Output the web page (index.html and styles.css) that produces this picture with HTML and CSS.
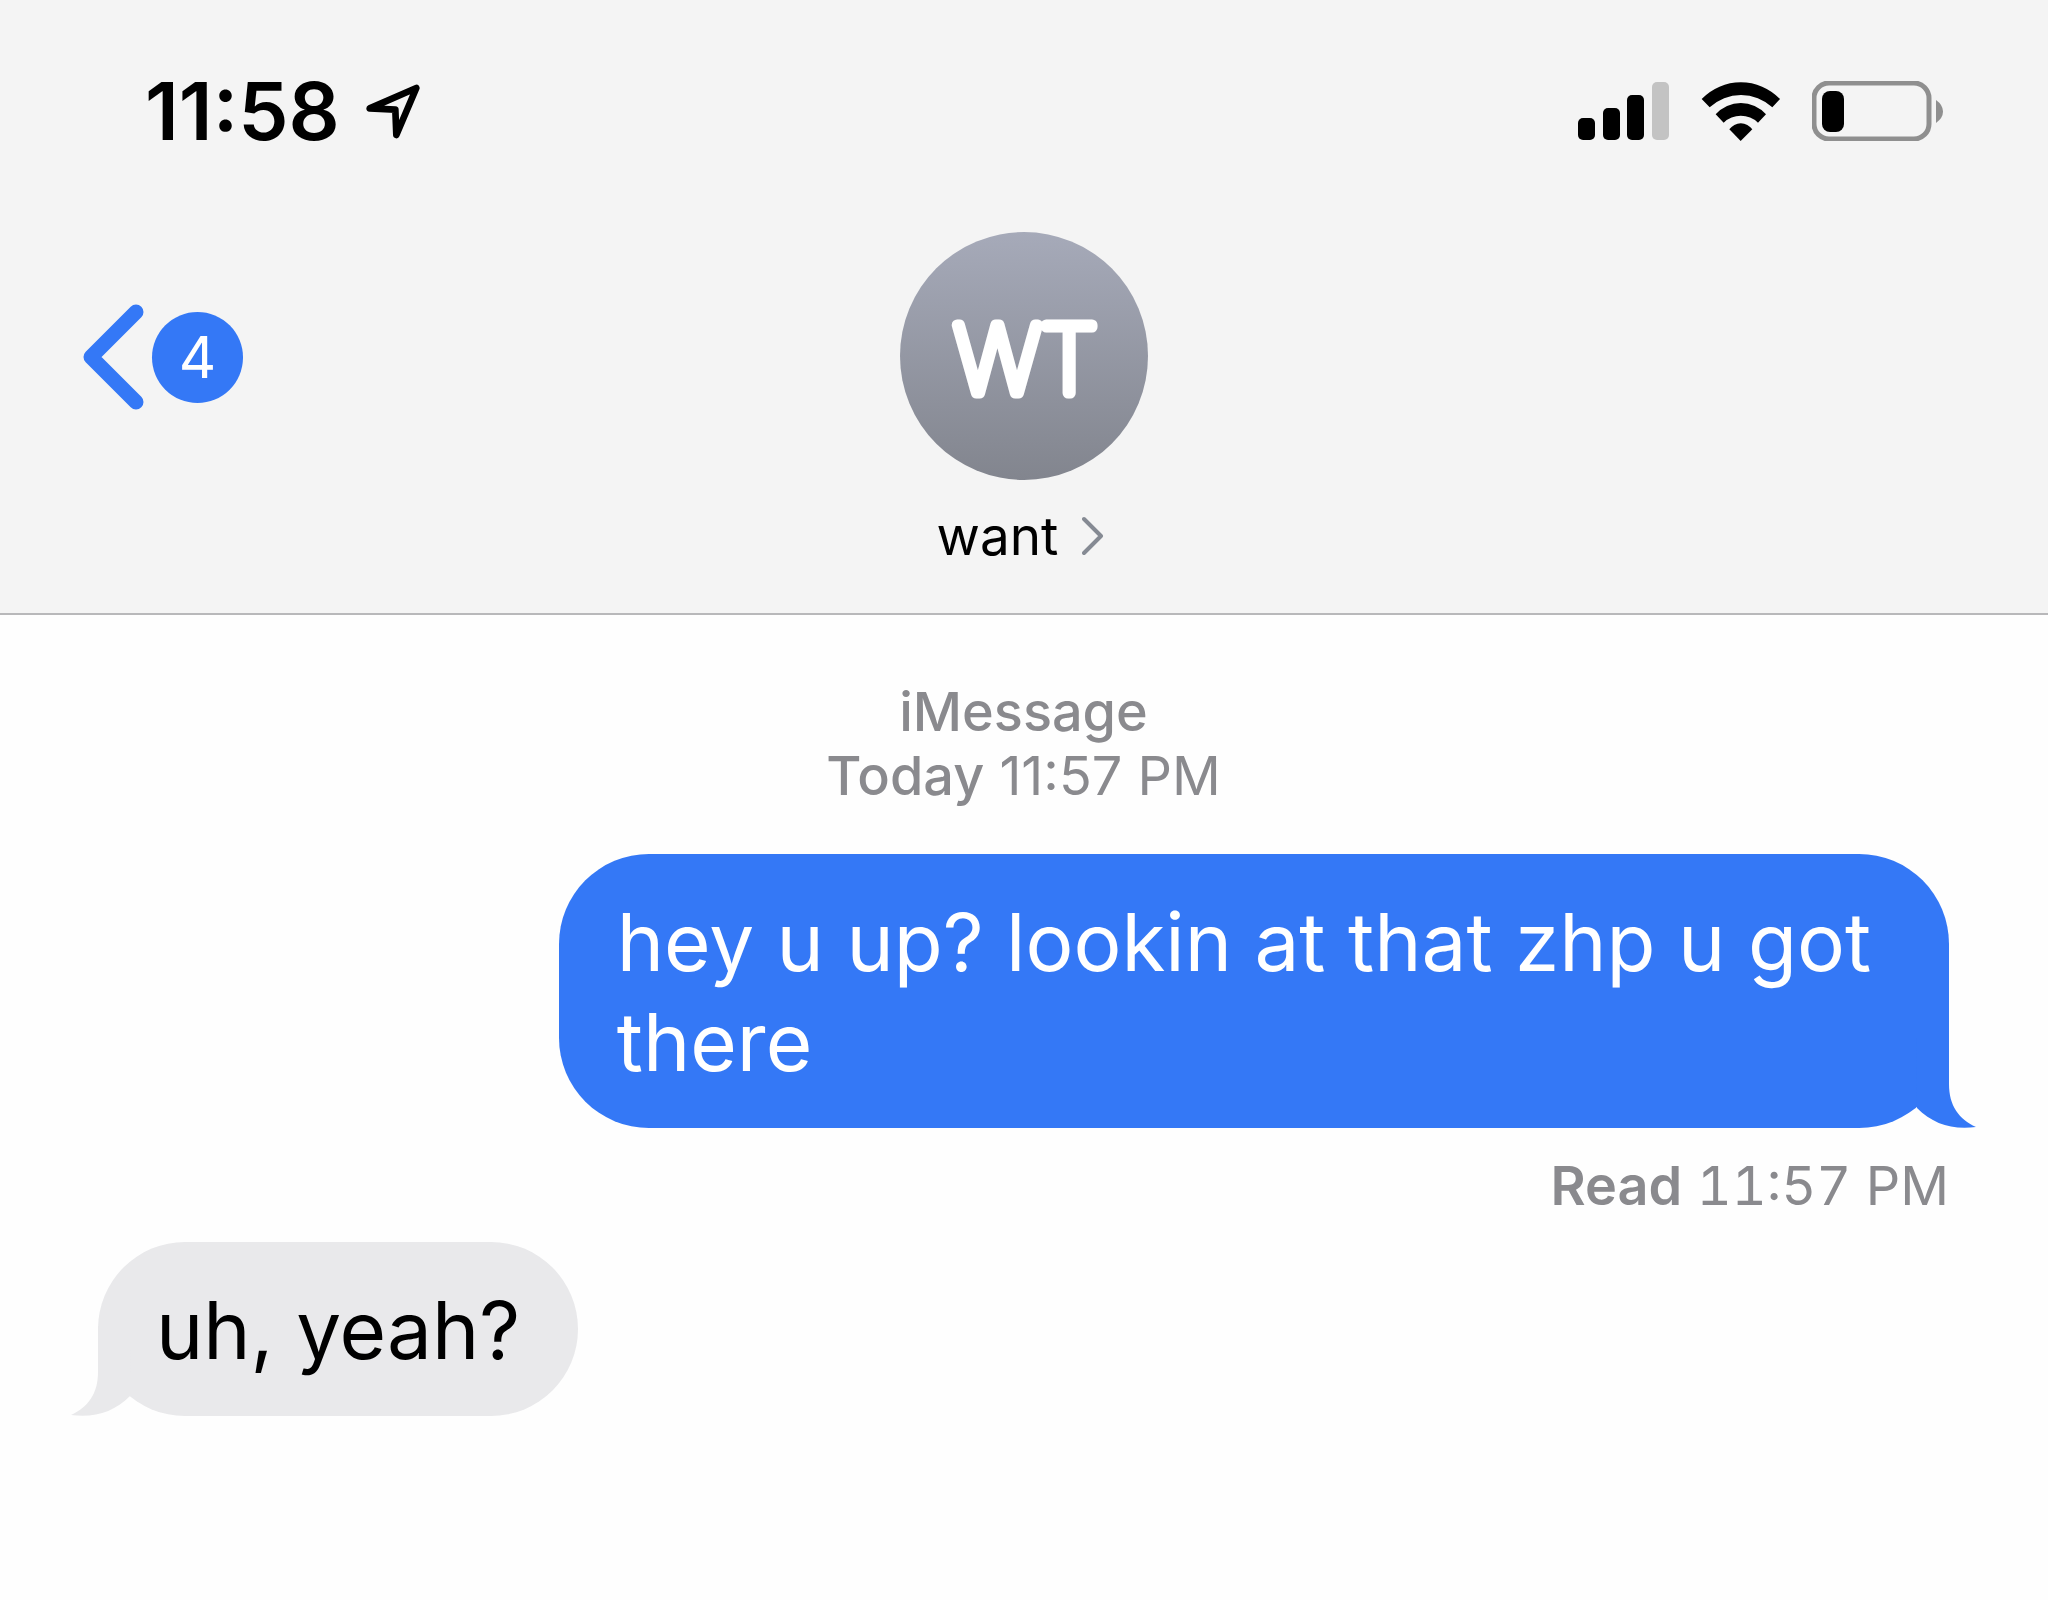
FILE: index.html
```html
<!DOCTYPE html>
<html lang="en">
<head>
<meta charset="utf-8">
<meta name="viewport" content="width=device-width, initial-scale=1">
<title>Messages – want</title>
<link rel="stylesheet" href="styles.css">
</head>
<body>
<header class="header">
  <div class="status">
    <div class="status-group status-left">
      <time class="clock">11:58</time>
      <svg class="location" viewBox="705 70 165 165" aria-hidden="true"><path d="M716 143 L856 82 L796 223 L793 147 Z"/></svg>
    </div>
    <div class="status-group status-right">
      <svg class="signal" viewBox="0 0 92 60" aria-hidden="true">
        <rect x="0" y="37" width="17" height="22" rx="5"/>
        <rect x="25" y="27" width="17" height="32" rx="5"/>
        <rect x="49" y="14" width="17" height="45" rx="5"/>
        <rect class="signal-off" x="74" y="1" width="17" height="58" rx="5"/>
      </svg>
      <svg class="wifi" viewBox="422 60 240 180" aria-hidden="true">
        <path d="M424 114A163 163 0 0 1 659 114L636 139A138 138 0 0 0 448 139Z"/>
        <path d="M466 160A101 101 0 0 1 617 160L593 185A75 75 0 0 0 490 185Z"/>
        <path d="M507 205A42 42 0 0 1 576 205L541 240Z"/>
      </svg>
      <svg class="battery" viewBox="0 0 132 60" aria-hidden="true">
        <rect class="battery-case" x="2" y="2" width="115" height="56" rx="15"/>
        <rect x="10" y="10" width="22" height="41" rx="8"/>
        <path class="battery-cap" d="M124 19Q131 24 131 30.500Q131 37 124 42Z"/>
      </svg>
    </div>
  </div>
  <nav class="nav">
    <button class="back" type="button" aria-label="Back, 4 unread">
      <svg class="back-arrow" viewBox="0 0 62 106" aria-hidden="true"><path d="M53 8L8 53L53 98"/></svg>
      <span class="badge">4</span>
    </button>
    <a class="contact" href="#want">
      <span class="avatar">
        <svg class="initials" viewBox="0 0 248 248" aria-hidden="true"><text x="126" y="161" text-anchor="middle">WT</text></svg>
      </span>
      <span class="name">want
        <svg class="name-arrow" viewBox="0 0 29 40" aria-hidden="true"><path d="M2 3L19 20L2 37"/></svg>
      </span>
    </a>
  </nav>
</header>
<main class="thread">
  <p class="meta meta-center"><b>iMessage</b><br><b>Today</b> 11:57 PM</p>
  <div class="bubble sent">hey u up? lookin at that zhp u got there
    <svg class="tail" viewBox="0 0 60 90" aria-hidden="true"><path d="M0 0H33V46C33 68 43 81 60 89C36 92 17 86 1 70Z"/></svg>
  </div>
  <p class="meta meta-read"><b>Read</b> 11:57 PM</p>
  <div class="bubble received">uh, yeah?
    <svg class="tail" viewBox="0 0 60 90" aria-hidden="true"><path d="M0 0H33V46C33 68 43 81 60 89C36 92 17 86 1 70Z"/></svg>
  </div>
</main>
</body>
</html>
```
FILE: styles.css
```css
* {
  box-sizing: border-box;
}

body {
  margin: 0;
  min-height: 100vh;
  background: #fefefe;
  color: #000;
  font-family: Inter, "Liberation Sans", sans-serif;
}

svg {
  display: block;
  flex: none;
}

.header {
  background: #f4f4f4;
  border-bottom: 2px solid #b8b8ba;
  padding: 81px 83px 45px;
}

.status,
.status-group {
  display: flex;
  align-items: center;
}

.status {
  justify-content: space-between;
  height: 60px;
  padding: 0 21px 0 62px;
}

.status-left {
  gap: 26px;
}

.status-right {
  gap: 31px;
}

.clock {
  font-size: 80px;
  font-weight: 600;
  line-height: 60px;
}

.location {
  width: 55px;
  height: 55px;
  fill: none;
  stroke: #000;
  stroke-width: 20;
  stroke-linejoin: round;
}

.signal {
  width: 92px;
  height: 60px;
}

.signal-off {
  fill: #c3c3c3;
}

.wifi {
  width: 80px;
  height: 60px;
}

.battery {
  width: 132px;
  height: 60px;
}

.battery-case {
  fill: none;
  stroke: #8f8f8f;
  stroke-width: 5;
}

.battery-cap {
  fill: #8f8f8f;
}

.nav {
  display: grid;
  grid-template-columns: 1fr auto 1fr;
  margin-top: 91px;
}

.back {
  display: flex;
  align-items: center;
  justify-self: start;
  height: 250px;
  gap: 7px;
  padding: 0;
  border: 0;
  background: none;
  font: inherit;
}

.back-arrow {
  width: 62px;
  height: 106px;
  fill: none;
  stroke: #3478f6;
  stroke-width: 15;
  stroke-linecap: round;
  stroke-linejoin: round;
}

.badge {
  width: 91px;
  height: 91px;
  border-radius: 50%;
  background: #3478f6;
  color: #fff;
  font-size: 58px;
  line-height: 91px;
  text-align: center;
}

.contact {
  display: flex;
  flex-direction: column;
  align-items: center;
  gap: 24px;
  color: inherit;
  text-decoration: none;
}

.avatar {
  width: 248px;
  height: 248px;
  border-radius: 50%;
  background: linear-gradient(#a6aab9, #82858e);
}

.initials {
  width: 248px;
  height: 248px;
  fill: #fff;
  stroke: #fff;
  stroke-width: 11;
  stroke-linejoin: round;
  font-size: 93px;
  font-weight: 100;
}

.name {
  display: flex;
  align-items: center;
  gap: 24px;
  font-size: 53px;
  line-height: 64px;
}

.name-arrow {
  width: 29px;
  height: 40px;
  fill: none;
  stroke: #858a93;
  stroke-width: 4;
  stroke-linecap: round;
  stroke-linejoin: round;
}

.thread {
  display: flex;
  flex-direction: column;
  align-items: flex-start;
  padding: 65px 99px 65px 98px;
}

.meta {
  margin: 0;
  color: #8a8a8e;
  font-size: 54px;
  line-height: 64px;
}

.meta b {
  font-weight: 500;
}

.meta-center {
  align-self: center;
  margin-bottom: 46px;
  text-align: center;
}

.meta-read {
  align-self: flex-end;
  margin: 26px 0 24px;
  font-variant-numeric: tabular-nums;
}

.meta-read b {
  font-weight: 600;
}

.bubble {
  position: relative;
  max-width: calc(75% + 2px);
  padding: 38px 58px 36px;
  border-radius: 90px;
  font-size: 80px;
  line-height: 100px;
}

.sent {
  align-self: flex-end;
  background: #3478f6;
  color: #fff;
}

.received {
  background: #e9e9eb;
}

.tail {
  position: absolute;
  right: -27px;
  bottom: 0;
  width: 60px;
  height: 90px;
  fill: #3478f6;
}

.received .tail {
  right: auto;
  left: -27px;
  fill: #e9e9eb;
  transform: scaleX(-1);
}
```
